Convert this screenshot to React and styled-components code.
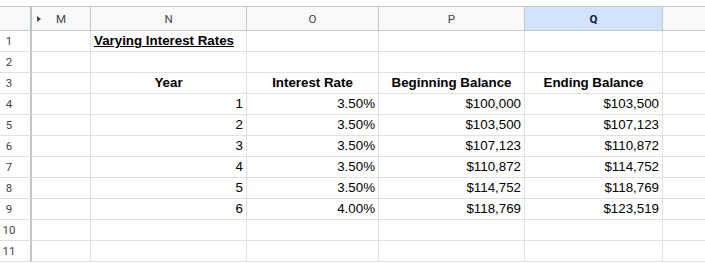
import React from 'react';
import styled, { createGlobalStyle } from 'styled-components';

const Global = createGlobalStyle`
  html, body { margin: 0; padding: 0; background: #fff; }
  body { font-family: "Liberation Sans", Arial, sans-serif; overflow: hidden; }
`

const Page = styled.div`
  padding-top: 6px;
  width: 705px;
  height: 263px;
  overflow: hidden;
  box-sizing: border-box;
`

const Grid = styled.div`
  display: grid;
  grid-template-columns: 32px 59px 156px 132px 146px 138px 60px;
  grid-template-rows: 24px;
  grid-auto-rows: 21px;
  border-top: 1px solid #c4c7c5;
  width: 723px;
`

const HeadCell = styled.div`
  background: ${({ selected }) => (selected ? '#d3e3fd' : '#f8f9fa')};
  border-right: 1px solid #c4c7c5;
  border-bottom: 1px solid #c4c7c5;
  box-sizing: border-box;
  display: flex;
  align-items: center;
  justify-content: center;
  position: relative;
  font-family: Roboto, "Liberation Sans", Arial, sans-serif;
  font-size: 11.5px;
  color: ${({ selected }) => (selected ? '#041e49' : '#444746')};
  font-weight: ${({ selected }) => (selected ? 700 : 400)};
  ${({ corner }) => corner && 'border-right: 2px solid #bdc1c6;'}
`

const Arrow = styled.span`
  position: absolute;
  left: 5px;
  top: 9px;
  width: 0;
  height: 0;
  border-top: 3.5px solid transparent;
  border-bottom: 3.5px solid transparent;
  border-left: 4px solid #444746;
`

const RowNum = styled.div`
  box-sizing: border-box;
  background: #fff;
  border-right: 2px solid #c4c7c5;
  border-bottom: 1px solid #e1e1e1;
  padding-right: 12px;
  display: flex;
  align-items: center;
  justify-content: center;
  font-family: Roboto, "Liberation Sans", Arial, sans-serif;
  font-size: 11.5px;
  color: #444746;
`

const Cell = styled.div`
  box-sizing: border-box;
  border-right: 1px solid #e1e1e1;
  border-bottom: 1px solid #e1e1e1;
  display: flex;
  align-items: flex-end;
  justify-content: ${({ align }) =>
    align === 'right' ? 'flex-end' : align === 'center' ? 'center' : 'flex-start'};
  padding: 0 3px 2px 3px;
  font-size: 13.33px;
  line-height: 16px;
  color: #000;
  white-space: nowrap;
  font-weight: ${({ bold }) => (bold ? 700 : 400)};
  text-decoration: ${({ underline }) => (underline ? 'underline' : 'none')};
`

const data = [
  [1, '3.50%', '$100,000', '$103,500'],
  [2, '3.50%', '$103,500', '$107,123'],
  [3, '3.50%', '$107,123', '$110,872'],
  [4, '3.50%', '$110,872', '$114,752'],
  [5, '3.50%', '$114,752', '$118,769'],
  [6, '4.00%', '$118,769', '$123,519'],
]

const Blank = ({ n }) => Array.from({ length: n }, (_, i) => <Cell key={i} />)

export default function App() {
  const rows = []

  rows.push(
    <React.Fragment key="r1">
      <RowNum>1</RowNum>
      <Cell />
      <Cell bold underline>Varying Interest Rates</Cell>
      <Blank n={4} />
    </React.Fragment>
  )
  rows.push(
    <React.Fragment key="r2">
      <RowNum>2</RowNum>
      <Blank n={6} />
    </React.Fragment>
  )
  rows.push(
    <React.Fragment key="r3">
      <RowNum>3</RowNum>
      <Cell />
      <Cell bold align="center">Year</Cell>
      <Cell bold align="center">Interest Rate</Cell>
      <Cell bold align="center">Beginning Balance</Cell>
      <Cell bold align="center">Ending Balance</Cell>
      <Cell />
    </React.Fragment>
  )
  data.forEach((d, i) => {
    rows.push(
      <React.Fragment key={'d' + i}>
        <RowNum>{i + 4}</RowNum>
        <Cell />
        {d.map((v, j) => (
          <Cell key={j} align="right">{v}</Cell>
        ))}
        <Cell />
      </React.Fragment>
    )
  })
  ;[10, 11].forEach((n) =>
    rows.push(
      <React.Fragment key={'e' + n}>
        <RowNum>{n}</RowNum>
        <Blank n={6} />
      </React.Fragment>
    )
  )

  return (
    <Page>
      <Global />
      <Grid>
        <HeadCell corner />
        <HeadCell><Arrow />M</HeadCell>
        <HeadCell>N</HeadCell>
        <HeadCell>O</HeadCell>
        <HeadCell>P</HeadCell>
        <HeadCell selected>Q</HeadCell>
        <HeadCell />
        {rows}
      </Grid>
    </Page>
  )
}
